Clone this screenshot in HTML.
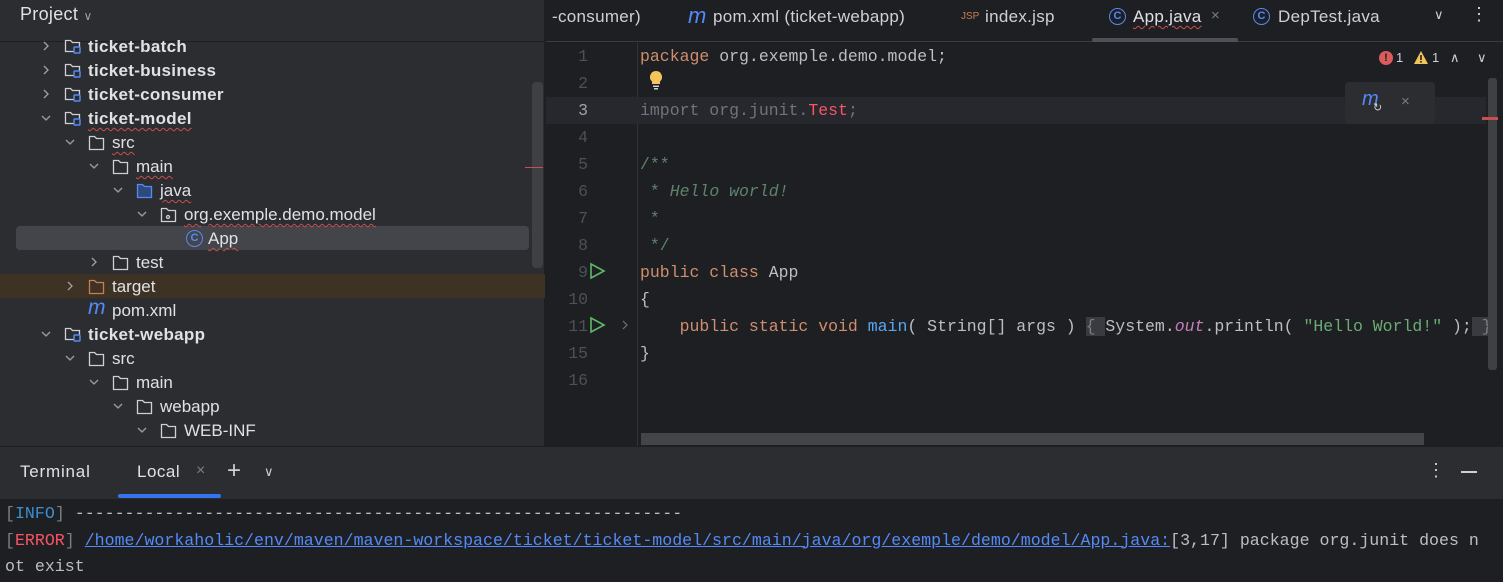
<!DOCTYPE html>
<html><head><meta charset="utf-8"><style>
*{margin:0;padding:0;box-sizing:border-box}
body{width:1503px;height:582px;overflow:hidden;background:#1e1f22;font-family:"Liberation Sans",sans-serif;color:#dfe1e5;position:relative}
.a{position:absolute;white-space:pre}
.mono{font-family:"Liberation Mono",monospace;font-size:16.5px}
.sq{text-decoration:underline wavy #c94f4f;text-decoration-thickness:1px;text-underline-offset:3px}
.row{position:absolute;left:0;width:545px;height:24px;font-size:17px;line-height:24px}
.row .t{position:absolute;top:1px}
.b{font-weight:bold;letter-spacing:0.3px}
.tab{font-size:17px;color:#ced0d6;letter-spacing:0.3px}
.cc{position:absolute;width:17px;height:17px;border:1.5px solid #548af7;border-radius:50%;font-size:11px;color:#548af7;text-align:center;line-height:14px;font-weight:bold}
</style></head><body>
<!-- sidebar -->
<div class="a" style="left:0;top:0;width:545px;height:446px;background:#2b2d30;border-right:1px solid #1e1f22"></div>
<div class="a" style="left:20px;top:4px;font-size:18px;color:#dfe1e5;letter-spacing:0.3px">Project <span style="font-size:12px;color:#9da0a8">&#x2228;</span></div>
<div class="a" style="left:0;top:41px;width:545px;height:1px;background:#1e1f22"></div>
<div class="a" style="left:16px;top:226px;width:513px;height:24px;background:#43454a;border-radius:4px"></div>
<div class="a" style="left:0;top:274px;width:545px;height:24px;background:#3d3223"></div>
<div class="a" style="left:532px;top:82px;width:11px;height:186px;background:#3e4043;border-radius:4px"></div>
<div class="a" style="left:525px;top:167px;width:18px;height:1px;background:#c94f4f"></div>
<svg class="a" style="left:0;top:34px" width="545" height="410">
<g fill="none" stroke="#9da0a8" stroke-width="1.3">
<path d="M44 8l4 4-4 4M44 32l4 4-4 4M44 56l4 4-4 4M42 82l4 4 4-4M66 106l4 4 4-4M90 130l4 4 4-4M114 154l4 4 4-4M138 178l4 4 4-4M92 224l4 4-4 4M68 248l4 4-4 4M42 298l4 4 4-4M66 322l4 4 4-4M90 346l4 4 4-4M114 370l4 4 4-4M138 394l4 4 4-4"/>
</g>
<g fill="none" stroke="#ced0d6" stroke-width="1.3">
<path d="M65.5 6.5h5l2 2h7v9h-14z"/><path d="M65.5 30.5h5l2 2h7v9h-14z"/><path d="M65.5 54.5h5l2 2h7v9h-14z"/><path d="M65.5 78.5h5l2 2h7v9h-14z"/><path d="M65.5 294.5h5l2 2h7v9h-14z"/>
<path d="M89.5 102.5h5l2 2h7v11h-14z"/><path d="M113.5 126.5h5l2 2h7v11h-14z"/><path d="M113.5 222.5h5l2 2h7v11h-14z"/>
<path d="M161.5 174.5h5l2 2h7v11h-14z"/><circle cx="168" cy="183" r="1.5"/>
<path d="M89.5 318.5h5l2 2h7v11h-14z"/><path d="M113.5 342.5h5l2 2h7v11h-14z"/><path d="M137.5 366.5h5l2 2h7v11h-14z"/><path d="M161.5 390.5h5l2 2h7v11h-14z"/>
</g>
<path d="M89.5 246.5h5l2 2h7v11h-14z" fill="none" stroke="#c77d55" stroke-width="1.3"/>
<path d="M137.5 150.5h5l2 2h7v11h-14z" fill="#2f4a7a" stroke="#548af7" stroke-width="1.3"/>
<g fill="#2b2d30" stroke="#548af7" stroke-width="1.5"><rect x="74" y="13" width="6" height="6" rx="1"/><rect x="74" y="37" width="6" height="6" rx="1"/><rect x="74" y="61" width="6" height="6" rx="1"/><rect x="74" y="85" width="6" height="6" rx="1"/><rect x="74" y="301" width="6" height="6" rx="1"/></g>
</svg>
<div class="cc" style="left:186px;top:230px">C</div>
<div class="row" style="top:34px"><span class="t b" style="left:88px">ticket-batch</span></div>
<div class="row" style="top:58px"><span class="t b" style="left:88px">ticket-business</span></div>
<div class="row" style="top:82px"><span class="t b" style="left:88px">ticket-consumer</span></div>
<div class="row" style="top:106px"><span class="t b sq" style="left:88px">ticket-model</span></div>
<div class="row" style="top:130px"><span class="t sq" style="left:112px">src</span></div>
<div class="row" style="top:154px"><span class="t sq" style="left:136px">main</span></div>
<div class="row" style="top:178px"><span class="t sq" style="left:160px">java</span></div>
<div class="row" style="top:202px"><span class="t sq" style="left:184px">org.exemple.demo.model</span></div>
<div class="row" style="top:226px"><span class="t sq" style="left:208px">App</span></div>
<div class="row" style="top:250px"><span class="t" style="left:136px">test</span></div>
<div class="row" style="top:274px"><span class="t" style="left:112px">target</span></div>
<div class="row" style="top:298px"><span class="t" style="left:88px;color:#548af7;font-style:italic;font-size:21px;top:-2px">m</span><span class="t" style="left:112px">pom.xml</span></div>
<div class="row" style="top:322px"><span class="t b" style="left:88px">ticket-webapp</span></div>
<div class="row" style="top:346px"><span class="t" style="left:112px">src</span></div>
<div class="row" style="top:370px"><span class="t" style="left:136px">main</span></div>
<div class="row" style="top:394px"><span class="t" style="left:160px">webapp</span></div>
<div class="row" style="top:418px"><span class="t" style="left:184px">WEB-INF</span></div>

<!-- tabs -->
<div class="a" style="left:546px;top:0;width:957px;height:42px;background:#1e1f22;border-bottom:1px solid #393b40"></div>
<div class="a tab" style="left:552px;top:7px">-consumer)</div>
<div class="a" style="left:688px;top:3px;font-size:22px;color:#548af7;font-style:italic">m</div>
<div class="a tab" style="left:713px;top:7px">pom.xml (ticket-webapp)</div>
<div class="a" style="left:961px;top:11px;font-size:10px;color:#c77d55">JSP</div>
<div class="a tab" style="left:985px;top:7px">index.jsp</div>
<div class="cc" style="left:1109px;top:8px">C</div>
<div class="a tab sq" style="left:1133px;top:7px;color:#dfe1e5">App.java</div>
<div class="a" style="left:1211px;top:7px;font-size:15px;color:#7a7e85">×</div>
<div class="a" style="left:1092px;top:38px;width:146px;height:4px;background:#4e5157;border-radius:2px"></div>
<div class="cc" style="left:1253px;top:8px">C</div>
<div class="a tab" style="left:1278px;top:7px">DepTest.java</div>
<div class="a" style="left:1434px;top:7px;font-size:13px;color:#ced0d6">&#x2228;</div>
<div class="a" style="left:1470px;top:4px;font-size:18px;color:#ced0d6">&#x22EE;</div>

<!-- editor -->
<div class="a" style="left:637px;top:43px;width:1px;height:403px;background:#313438"></div>
<div class="a" style="left:546px;top:97px;width:940px;height:27px;background:#26282e"></div>
<div class="a mono" style="left:546px;top:43px;width:42px;text-align:right;line-height:27px;color:#4b5059">1
2
<span style="color:#a1a3ab">3</span>
4
5
6
7
8
9
10
11
15
16</div>
<svg class="a" style="left:588px;top:260px" width="50" height="80"><path d="M3 4l13 7-13 7z M3 58l13 7-13 7z" fill="none" stroke="#5fb865" stroke-width="1.6"/><path d="M35 61l4 4-4 4" fill="none" stroke="#6f737a" stroke-width="1.2"/></svg>
<svg class="a" style="left:648px;top:70px" width="16" height="22"><path d="M8 1a6 6 0 0 1 4 10.5V14H4v-2.5A6 6 0 0 1 8 1z" fill="#f2c55c"/><rect x="5" y="15.5" width="6" height="1.5" fill="#ced0d6"/><rect x="6" y="18" width="4" height="1.5" fill="#ced0d6"/></svg>
<div class="a mono" style="left:640px;top:43px;line-height:27px;color:#bcbec4;font-size:16.5px"><span style="color:#cf8e6d">package</span> org.exemple.demo.model;

<span style="color:#6f737a">import org.junit.</span><span style="color:#f75464">Test</span><span style="color:#6f737a">;</span>

<span style="color:#5f826b">/**
 * <i>Hello world!</i>
 *
 */</span>
<span style="color:#cf8e6d">public class</span> App
{
    <span style="color:#cf8e6d">public static void</span> <span style="color:#56a8f5">main</span>( String[] args ) <span style="background:#393b40;color:#7a7e85">{ </span>System.<i style="color:#c77dbb">out</i>.println( <span style="color:#6aab73">"Hello World!"</span> );<span style="background:#393b40;color:#7a7e85"> }</span>
}
</div>
<div class="a" style="left:1379px;top:51px;width:14px;height:14px;border-radius:50%;background:#db5c5c;color:#1e1f22;font-size:11px;font-weight:bold;text-align:center;line-height:14px">!</div>
<div class="a" style="left:1396px;top:50px;font-size:13px;color:#ced0d6">1</div>
<svg class="a" style="left:1413px;top:50px" width="16" height="15"><path d="M8 1L15 14H1z" fill="#f2c55c"/><rect x="7.2" y="5" width="1.6" height="5" fill="#1e1f22"/><rect x="7.2" y="11" width="1.6" height="1.6" fill="#1e1f22"/></svg>
<div class="a" style="left:1432px;top:50px;font-size:13px;color:#ced0d6">1</div>
<div class="a" style="left:1450px;top:50px;font-size:13px;color:#ced0d6">&#x2227;</div>
<div class="a" style="left:1477px;top:50px;font-size:13px;color:#ced0d6">&#x2228;</div>
<div class="a" style="left:1345px;top:82px;width:90px;height:42px;background:#2b2d30;border-radius:4px"></div>
<div class="a" style="left:1362px;top:88px;font-size:20px;color:#548af7;font-style:italic">m</div>
<div class="a" style="left:1373px;top:101px;font-size:11px;color:#ced0d6">&#x21bb;</div>
<div class="a" style="left:1401px;top:93px;font-size:15px;color:#7a7e85">×</div>
<div class="a" style="left:1488px;top:78px;width:9px;height:292px;background:#3e4043;border-radius:3px"></div>
<div class="a" style="left:1482px;top:117px;width:16px;height:3px;background:#c94f4f"></div>
<div class="a" style="left:641px;top:433px;width:783px;height:12px;background:#434548"></div>

<!-- terminal -->
<div class="a" style="left:0;top:446px;width:1503px;height:53px;background:#2b2d30;border-top:1px solid #1e1f22"></div>
<div class="a" style="left:20px;top:462px;font-size:17px;color:#dfe1e5;letter-spacing:0.8px">Terminal</div>
<div class="a" style="left:137px;top:462px;font-size:17px;color:#dfe1e5;letter-spacing:0.5px">Local</div>
<div class="a" style="left:196px;top:462px;font-size:16px;color:#7a7e85">×</div>
<div class="a" style="left:227px;top:457px;font-size:24px;color:#ced0d6;font-weight:300">+</div>
<div class="a" style="left:264px;top:464px;font-size:13px;color:#ced0d6">&#x2228;</div>
<div class="a" style="left:118px;top:494px;width:103px;height:4px;background:#3574f0;border-radius:2px"></div>
<div class="a" style="left:1427px;top:460px;font-size:18px;color:#ced0d6">&#x22EE;</div>
<div class="a" style="left:1461px;top:471px;width:16px;height:1.5px;background:#ced0d6"></div>
<div class="a mono" style="left:5px;top:501px;line-height:26.5px;color:#bcbec4;font-size:16.6px"><span style="color:#7a7e85">[</span><span style="color:#3d8fd0">INFO</span><span style="color:#7a7e85">]</span> -------------------------------------------------------------
<span style="color:#7a7e85">[</span><span style="color:#f75464">ERROR</span><span style="color:#7a7e85">]</span> <span style="color:#548af7;text-decoration:underline">/home/workaholic/env/maven/maven-workspace/ticket/ticket-model/src/main/java/org/exemple/demo/model/App.java:</span>[3,17] package org.junit does n
ot exist</div>
</body></html>
